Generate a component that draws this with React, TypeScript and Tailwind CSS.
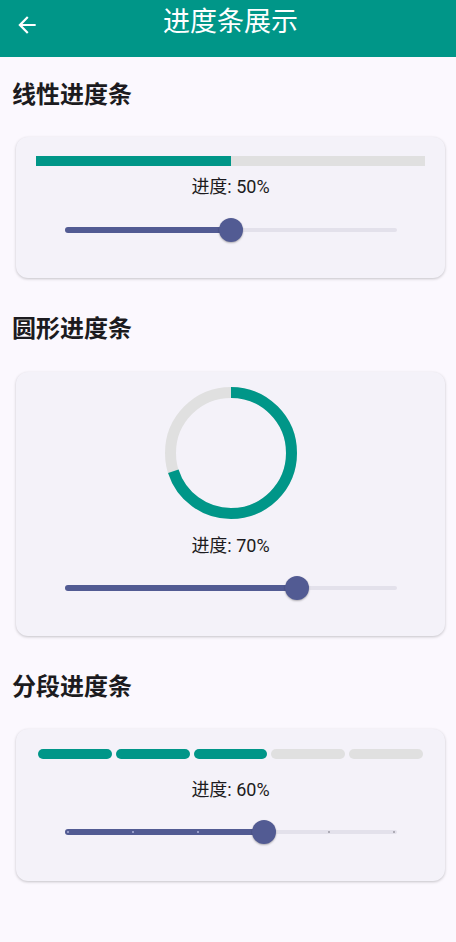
import React from "react";

const FONT = { fontFamily: 'Roboto, "Noto Sans CJK SC", sans-serif' };

function Slider({ value, divisions }: { value: number; divisions?: number }) {
  const ticks = divisions ? Array.from({ length: divisions + 1 }, (_, i) => i / divisions) : [];
  return (
    <div className="relative ml-[29px] mr-[28px] h-12">
      <div className="absolute left-0 right-0 top-1/2 h-[4px] -translate-y-1/2 rounded-full bg-[#E3E1EB]" />
      <div
        className="absolute left-0 top-1/2 h-[6px] -translate-y-1/2 rounded-l-full bg-[#525B93]"
        style={{ width: `${value * 100}%` }}
      />
      {ticks.map((t, i) => (
        <div
          key={i}
          className={`absolute top-1/2 h-[2px] w-[2px] -translate-x-1/2 -translate-y-1/2 rounded-full ${
            t <= value ? "bg-[#AEB2DA]" : "bg-[#9C9AA5]"
          }`}
          style={{ left: `calc(3px + (100% - 6px) * ${t})` }}
        />
      ))}
      <div
        className="absolute top-1/2 h-6 w-6 -translate-x-1/2 -translate-y-1/2 rounded-full bg-[#525B93] shadow-[0_1px_2px_rgba(0,0,0,0.3)]"
        style={{ left: `${value * 100}%` }}
      />
    </div>
  );
}

function Card({ children, className = "" }: { children: React.ReactNode; className?: string }) {
  return (
    <div className={`mx-1 rounded-xl bg-[#F4F2F9] px-5 shadow-[0_1px_3px_rgba(0,0,0,0.22)] ${className}`}>
      {children}
    </div>
  );
}

function Title({ children, className = "" }: { children: React.ReactNode; className?: string }) {
  return (
    <div className={`h-7 text-[24px] font-bold leading-7 text-[#1C1B20] ${className}`}>{children}</div>
  );
}

function Label({ children, className = "" }: { children: React.ReactNode; className?: string }) {
  return (
    <div className={`h-6 text-center text-[18px] leading-6 text-[#1C1B20] ${className}`}>{children}</div>
  );
}

function Ring({ value }: { value: number }) {
  const size = 132;
  const sw = 11;
  const r = (size - sw) / 2;
  const c = 2 * Math.PI * r;
  return (
    <svg width={size} height={size} viewBox={`0 0 ${size} ${size}`} className="mx-auto block">
      <circle cx={size / 2} cy={size / 2} r={r} fill="none" stroke="#E0E0E0" strokeWidth={sw} />
      <circle
        cx={size / 2}
        cy={size / 2}
        r={r}
        fill="none"
        stroke="#009688"
        strokeWidth={sw}
        strokeDasharray={`${c * value} ${c}`}
        transform={`rotate(-90 ${size / 2} ${size / 2})`}
      />
    </svg>
  );
}

export default function App() {
  const segs = [true, true, true, false, false];
  return (
    <div className="min-h-[942px] w-full bg-[#FBF8FE]" style={FONT}>
      <div className="relative flex h-[57px] items-start justify-center bg-[#009688]">
        <svg
          className="absolute left-[14px] top-[12px]"
          width="26"
          height="26"
          viewBox="0 0 24 24"
          fill="#ffffff"
        >
          <path d="M20 11H7.83l5.59-5.59L12 4l-8 8 8 8 1.41-1.41L7.83 13H20v-2z" />
        </svg>
        <div className="pl-[5px] pt-[6px] text-[27px] leading-8 text-white">进度条展示</div>
      </div>

      <div className="pl-3 pr-[7px]">
        <Title className="mt-6">线性进度条</Title>
        <Card className="mt-7 pb-6 pt-[19px]">
          <div className="flex h-[10px] bg-[#E0E0E0]">
            <div className="h-full w-1/2 bg-[#009688]" />
          </div>
          <Label className="mt-[9px]">进度: 50%</Label>
          <div className="mt-[7px]">
            <Slider value={0.5} />
          </div>
        </Card>

        <Title className="mt-[37px]">圆形进度条</Title>
        <Card className="mt-[29px] pb-6 pt-[15px]">
          <Ring value={0.7} />
          <Label className="mt-[15px]">进度: 70%</Label>
          <div className="mt-[6px]">
            <Slider value={0.7} />
          </div>
        </Card>

        <Title className="mt-[37px]">分段进度条</Title>
        <Card className="mt-7 pb-[25px] pt-5">
          <div className="flex h-[10px]">
            {segs.map((on, i) => (
              <div
                key={i}
                className={`mx-[2px] h-full flex-1 rounded-full ${on ? "bg-[#009688]" : "bg-[#E0E0E0]"}`}
              />
            ))}
          </div>
          <Label className="mt-[19px]">进度: 60%</Label>
          <div className="mt-[6px]">
            <Slider value={0.6} divisions={5} />
          </div>
        </Card>
      </div>
    </div>
  );
}
